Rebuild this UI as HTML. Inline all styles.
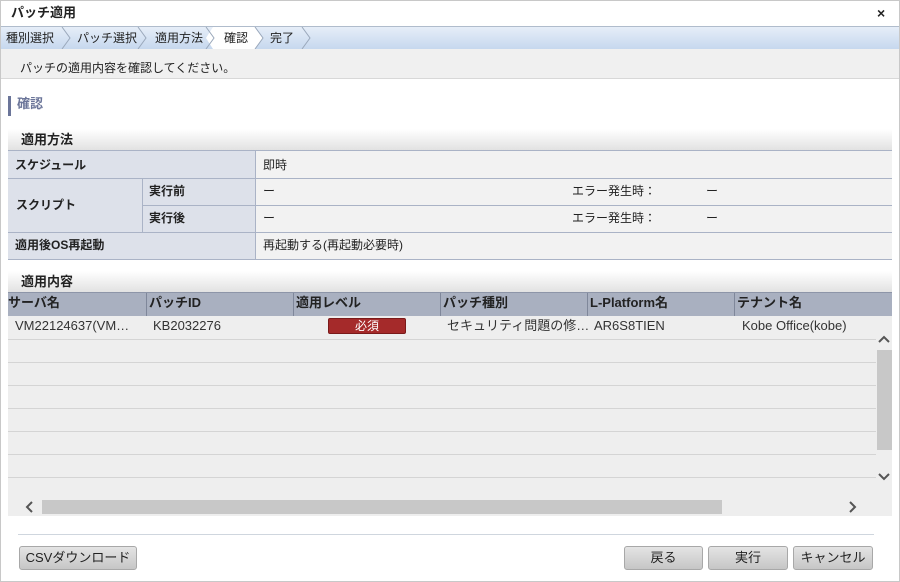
<!DOCTYPE html>
<html><head><meta charset="utf-8"><style>
*{box-sizing:border-box;margin:0;padding:0}
body{width:900px;height:582px;background:#fff;font-family:"Liberation Sans","Noto Sans CJK JP",sans-serif;font-size:12px;color:#222;position:relative;overflow:hidden}
.a{position:absolute}
.t{white-space:nowrap;line-height:14px}
.lbl{background:#dde1ea;font-weight:bold;color:#333}
.val{background:#f2f2f2}
.btn{position:absolute;top:546px;height:24px;border:1px solid #a8a8a8;border-radius:3px;background:linear-gradient(#e4e4e4,#c6c6c6);text-align:center;line-height:22px;font-size:13px;color:#222}
.hline{position:absolute;left:8px;width:884px;height:1px;background:#aab3c6}
</style></head><body>
<div class="a" style="left:0;top:0;width:900px;height:582px;border:1px solid #c8c8c8"></div>
<div class="a t" style="left:11px;top:6px;font-weight:bold;font-size:13px">パッチ適用</div>
<div class="a t" style="left:877px;top:6px;font-weight:bold;font-size:14px">×</div>
<div class="a" style="left:1px;top:26px;width:898px;height:23px;background:linear-gradient(#e6eef8,#c6d8ee);border-top:1px solid #b0bccc"></div>
<svg class="a" style="left:0;top:27px" width="320" height="22">
<polygon points="213,0 255,0 263,11 255,22 213,22 206,11" fill="#fff"/>
<g fill="none" stroke="#9aa8bb"><polyline points="62,0 70,11 62,22"/><polyline points="138,0 146,11 138,22"/><polyline points="206,0 214,11 206,22"/><polyline points="255,0 263,11 255,22"/><polyline points="302,0 310,11 302,22"/></g>
</svg>
<div class="a t" style="left:6px;top:31px">種別選択</div>
<div class="a t" style="left:77px;top:31px">パッチ選択</div>
<div class="a t" style="left:155px;top:31px">適用方法</div>
<div class="a t" style="left:224px;top:31px">確認</div>
<div class="a t" style="left:270px;top:31px">完了</div>
<div class="a" style="left:1px;top:49px;width:898px;height:30px;background:#f0f0f0;border-bottom:1px solid #d8d8d8"></div>
<div class="a t" style="left:20px;top:61px">パッチの適用内容を確認してください。</div>
<div class="a" style="left:8px;top:96px;width:3px;height:20px;background:#6b7599"></div>
<div class="a t" style="left:17px;top:97px;font-weight:bold;font-size:13px;color:#6b7599">確認</div>
<div class="a" style="left:8px;top:129px;width:884px;height:21px;background:linear-gradient(#fff,#e2e2e2)"></div>
<div class="a t" style="left:21px;top:133px;font-weight:bold;font-size:13px">適用方法</div>
<div class="a lbl" style="left:8px;top:150px;width:247px;height:110px"></div>
<div class="a val" style="left:255px;top:150px;width:637px;height:110px"></div>
<div class="a" style="left:142px;top:178px;width:1px;height:55px;background:#aab3c6"></div>
<div class="a" style="left:255px;top:150px;width:1px;height:110px;background:#aab3c6"></div>
<div class="hline" style="top:150px"></div>
<div class="hline" style="top:178px"></div>
<div class="hline" style="top:205px;left:142px;width:750px"></div>
<div class="hline" style="top:232px"></div>
<div class="hline" style="top:259px"></div>
<div class="a t" style="left:15px;top:158px;font-weight:bold">スケジュール</div>
<div class="a t" style="left:16px;top:198px;font-weight:bold">スクリプト</div>
<div class="a t" style="left:149px;top:184px;font-weight:bold">実行前</div>
<div class="a t" style="left:149px;top:211px;font-weight:bold">実行後</div>
<div class="a t" style="left:15px;top:238px;font-weight:bold">適用後OS再起動</div>
<div class="a t" style="left:263px;top:158px">即時</div>
<div class="a t" style="left:263px;top:184px">ー</div>
<div class="a t" style="left:263px;top:211px">ー</div>
<div class="a t" style="left:572px;top:184px">エラー発生時：</div>
<div class="a t" style="left:572px;top:211px">エラー発生時：</div>
<div class="a t" style="left:706px;top:184px">ー</div>
<div class="a t" style="left:706px;top:211px">ー</div>
<div class="a t" style="left:263px;top:238px">再起動する(再起動必要時)</div>
<div class="a" style="left:8px;top:271px;width:884px;height:21px;background:linear-gradient(#fff,#e2e2e2)"></div>
<div class="a t" style="left:21px;top:275px;font-weight:bold;font-size:13px">適用内容</div>
<div class="a" style="left:8px;top:292px;width:884px;height:224px;background:#eeeeee"></div>
<div class="a" style="left:8px;top:292px;width:884px;height:24px;background:#a9b0c0;border-top:1px solid #8d95a8"></div>
<div class="a" style="left:146px;top:293px;width:1px;height:23px;background:#7f879a"></div>
<div class="a" style="left:293px;top:293px;width:1px;height:23px;background:#7f879a"></div>
<div class="a" style="left:440px;top:293px;width:1px;height:23px;background:#7f879a"></div>
<div class="a" style="left:587px;top:293px;width:1px;height:23px;background:#7f879a"></div>
<div class="a" style="left:734px;top:293px;width:1px;height:23px;background:#7f879a"></div>
<div class="a t" style="left:8px;top:296px;font-weight:bold;font-size:13px">サーバ名</div>
<div class="a t" style="left:149px;top:296px;font-weight:bold;font-size:13px">パッチID</div>
<div class="a t" style="left:296px;top:296px;font-weight:bold;font-size:13px">適用レベル</div>
<div class="a t" style="left:443px;top:296px;font-weight:bold;font-size:13px">パッチ種別</div>
<div class="a t" style="left:590px;top:296px;font-weight:bold;font-size:13px">L-Platform名</div>
<div class="a t" style="left:737px;top:296px;font-weight:bold;font-size:13px">テナント名</div>
<div class="a" style="left:8px;top:339px;width:868px;height:1px;background:#d4d4d4"></div>
<div class="a" style="left:8px;top:362px;width:868px;height:1px;background:#d4d4d4"></div>
<div class="a" style="left:8px;top:385px;width:868px;height:1px;background:#d4d4d4"></div>
<div class="a" style="left:8px;top:408px;width:868px;height:1px;background:#d4d4d4"></div>
<div class="a" style="left:8px;top:431px;width:868px;height:1px;background:#d4d4d4"></div>
<div class="a" style="left:8px;top:454px;width:868px;height:1px;background:#d4d4d4"></div>
<div class="a" style="left:8px;top:477px;width:868px;height:1px;background:#d4d4d4"></div>
<div class="a t" style="left:15px;top:319px;font-size:13px;color:#333">VM22124637(VM…</div>
<div class="a t" style="left:153px;top:319px;font-size:13px;color:#333">KB2032276</div>
<div class="a" style="left:328px;top:318px;width:78px;height:16px;background:#a52a2a;border:1px solid #7a1a1a;border-radius:2px;color:#fff;text-align:center;line-height:14px;font-size:12px">必須</div>
<div class="a t" style="left:447px;top:319px;font-size:13px;color:#333">セキュリティ問題の修…</div>
<div class="a t" style="left:594px;top:319px;font-size:13px;color:#333">AR6S8TIEN</div>
<div class="a t" style="left:742px;top:319px;font-size:13px;color:#333">Kobe Office(kobe)</div>
<div class="a" style="left:877px;top:350px;width:15px;height:100px;background:#c8c8c8"></div>
<svg class="a" style="left:876px;top:330px" width="16" height="160"><g fill="none" stroke="#555" stroke-width="2"><polyline points="3,12 8,7 13,12"/><polyline points="3,144 8,149 13,144"/></g></svg>
<div class="a" style="left:42px;top:500px;width:680px;height:14px;background:#c8c8c8"></div>
<svg class="a" style="left:20px;top:498px" width="845" height="18"><g fill="none" stroke="#555" stroke-width="2"><polyline points="12,4 7,9 12,14"/><polyline points="830,4 835,9 830,14"/></g></svg>
<div class="a" style="left:18px;top:534px;width:856px;height:1px;background:#cfd6de"></div>
<div class="btn" style="left:19px;width:118px">CSVダウンロード</div>
<div class="btn" style="left:624px;width:79px">戻る</div>
<div class="btn" style="left:708px;width:80px">実行</div>
<div class="btn" style="left:793px;width:80px">キャンセル</div>
</body></html>
